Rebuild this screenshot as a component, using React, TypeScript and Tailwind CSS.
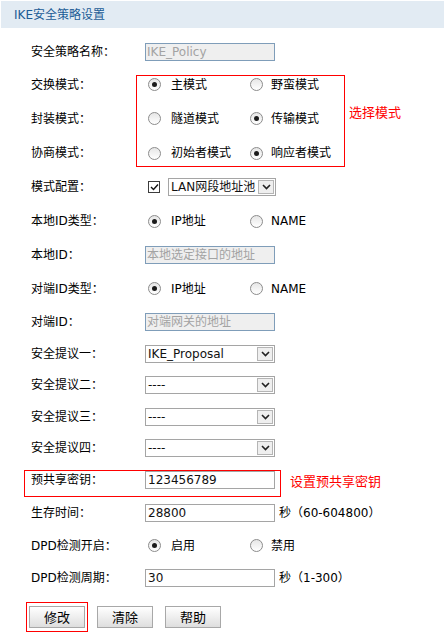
import type { ReactNode } from 'react';

const font = "font-['DejaVu_Sans','Noto_Sans_CJK_SC',sans-serif]";

function Radio({ on }: { on?: boolean }) {
  return (
    <span className="flex h-[13px] w-[13px] shrink-0 items-center justify-center rounded-full border border-[#8c8c8c] bg-gradient-to-b from-[#e6e6e6] to-white">
      {on && <span className="h-[5px] w-[5px] rounded-full bg-[#1b1b1b]" />}
    </span>
  );
}

function RadioPair({ a, b, first }: { a: string; b: string; first: boolean }) {
  return (
    <div className="ml-[3px] flex items-center">
      <div className="flex w-[102px] items-center gap-[10px]">
        <Radio on={first} />
        <span>{a}</span>
      </div>
      <div className="flex items-center gap-[8px]">
        <Radio on={!first} />
        <span>{b}</span>
      </div>
    </div>
  );
}

function Field({ value, disabled }: { value: string; disabled?: boolean }) {
  return (
    <div
      className={
        disabled
          ? 'flex h-[18px] w-[130px] items-center border border-[#7f9db9] bg-[#efefef] px-[1px] text-[#a3a3a3]'
          : 'flex h-[18px] w-[130px] items-center border border-[#a5a5a5] bg-white px-[2px] text-[#111]'
      }
    >
      {value}
    </div>
  );
}

function Chevron() {
  return (
    <svg width="9" height="6" viewBox="0 0 9 6">
      <path d="M1 1 L4.5 4.5 L8 1" fill="none" stroke="#222" strokeWidth="1.6" />
    </svg>
  );
}

function Select({ value, w = 130 }: { value: string; w?: number }) {
  return (
    <div
      className="flex h-[18px] items-center justify-between border border-[#a5a5a5] bg-white"
      style={{ width: w }}
    >
      <span className="pl-[2px] text-[#111]">{value}</span>
      <span className="mr-[1px] flex h-[14px] w-[16px] items-center justify-center border border-[#b5b5b5] bg-[#efefef]">
        <Chevron />
      </span>
    </div>
  );
}

function Row({ h, label, children }: { h: number; label: string; children?: ReactNode }) {
  return (
    <div className="flex items-center pl-[31px]" style={{ height: h }}>
      <div className="w-[114px] shrink-0">{label}</div>
      {children}
    </div>
  );
}

function Btn({ label }: { label: string }) {
  return (
    <button className="h-[22px] w-[56px] border border-[#a8a8a8] bg-gradient-to-b from-white to-[#dedede] text-[13px] text-black">
      {label}
    </button>
  );
}

export default function App() {
  return (
    <div className={`relative h-[633px] w-[445px] bg-white text-[12px] leading-none text-black ${font}`}>
      <div className="mx-[1px] mt-[1px] flex h-[27px] items-center bg-[#e2ebf3] pl-[13px] text-[#1b5c96]">
        IKE安全策略设置
      </div>

      <div className="pt-[7px]">
        <Row h={33} label="安全策略名称：">
          <Field value="IKE_Policy" disabled />
        </Row>
        <Row h={33} label="交换模式：">
          <RadioPair a="主模式" b="野蛮模式" first />
        </Row>
        <Row h={35} label="封装模式：">
          <RadioPair a="隧道模式" b="传输模式" first={false} />
        </Row>
        <Row h={34} label="协商模式：">
          <RadioPair a="初始者模式" b="响应者模式" first={false} />
        </Row>
        <Row h={34} label="模式配置：">
          <div className="ml-[3px] flex items-center gap-[8px]">
            <span className="flex h-[12px] w-[12px] items-center justify-center border border-[#3c3c3c] bg-white">
              <svg width="9" height="8" viewBox="0 0 9 8">
                <path d="M1 4 L3.5 6.5 L8 1.5" fill="none" stroke="#111" strokeWidth="1.4" />
              </svg>
            </span>
            <Select value="LAN网段地址池" w={108} />
          </div>
        </Row>
        <Row h={34} label="本地ID类型：">
          <RadioPair a="IP地址" b="NAME" first />
        </Row>
        <Row h={34} label="本地ID：">
          <Field value="本地选定接口的地址" disabled />
        </Row>
        <Row h={33} label="对端ID类型：">
          <RadioPair a="IP地址" b="NAME" first />
        </Row>
        <Row h={33} label="对端ID：">
          <Field value="对端网关的地址" disabled />
        </Row>
        <Row h={31} label="安全提议一：">
          <Select value="IKE_Proposal" />
        </Row>
        <Row h={32} label="安全提议二：">
          <Select value="----" />
        </Row>
        <Row h={31} label="安全提议三：">
          <Select value="----" />
        </Row>
        <Row h={32} label="安全提议四：">
          <Select value="----" />
        </Row>
        <Row h={32} label="预共享密钥：">
          <Field value="123456789" />
        </Row>
        <Row h={33} label="生存时间：">
          <Field value="28800" />
          <span className="ml-[4px]">秒（60-604800）</span>
        </Row>
        <Row h={33} label="DPD检测开启：">
          <RadioPair a="启用" b="禁用" first />
        </Row>
        <Row h={32} label="DPD检测周期：">
          <Field value="30" />
          <span className="ml-[4px]">秒（1-300）</span>
        </Row>

        <div className="flex gap-[12px] pl-[29px] pt-[12px]">
          <Btn label="修改" />
          <Btn label="清除" />
          <Btn label="帮助" />
        </div>
      </div>

      {/* red annotation marks drawn over the form */}
      <div className="absolute left-[136px] top-[74px] h-[92px] w-[209px] border border-[#ff0000]" />
      <div className="absolute left-[349px] top-[105px] text-[13px] text-[#ff0000]">选择模式</div>
      <div className="absolute left-[24px] top-[469px] h-[27px] w-[257px] border border-[#ff0000]" />
      <div className="absolute left-[290px] top-[474px] text-[13px] text-[#ff0000]">设置预共享密钥</div>
      <div className="absolute left-[26px] top-[601px] h-[30px] w-[62px] border border-[#ff0000]" />
    </div>
  );
}
